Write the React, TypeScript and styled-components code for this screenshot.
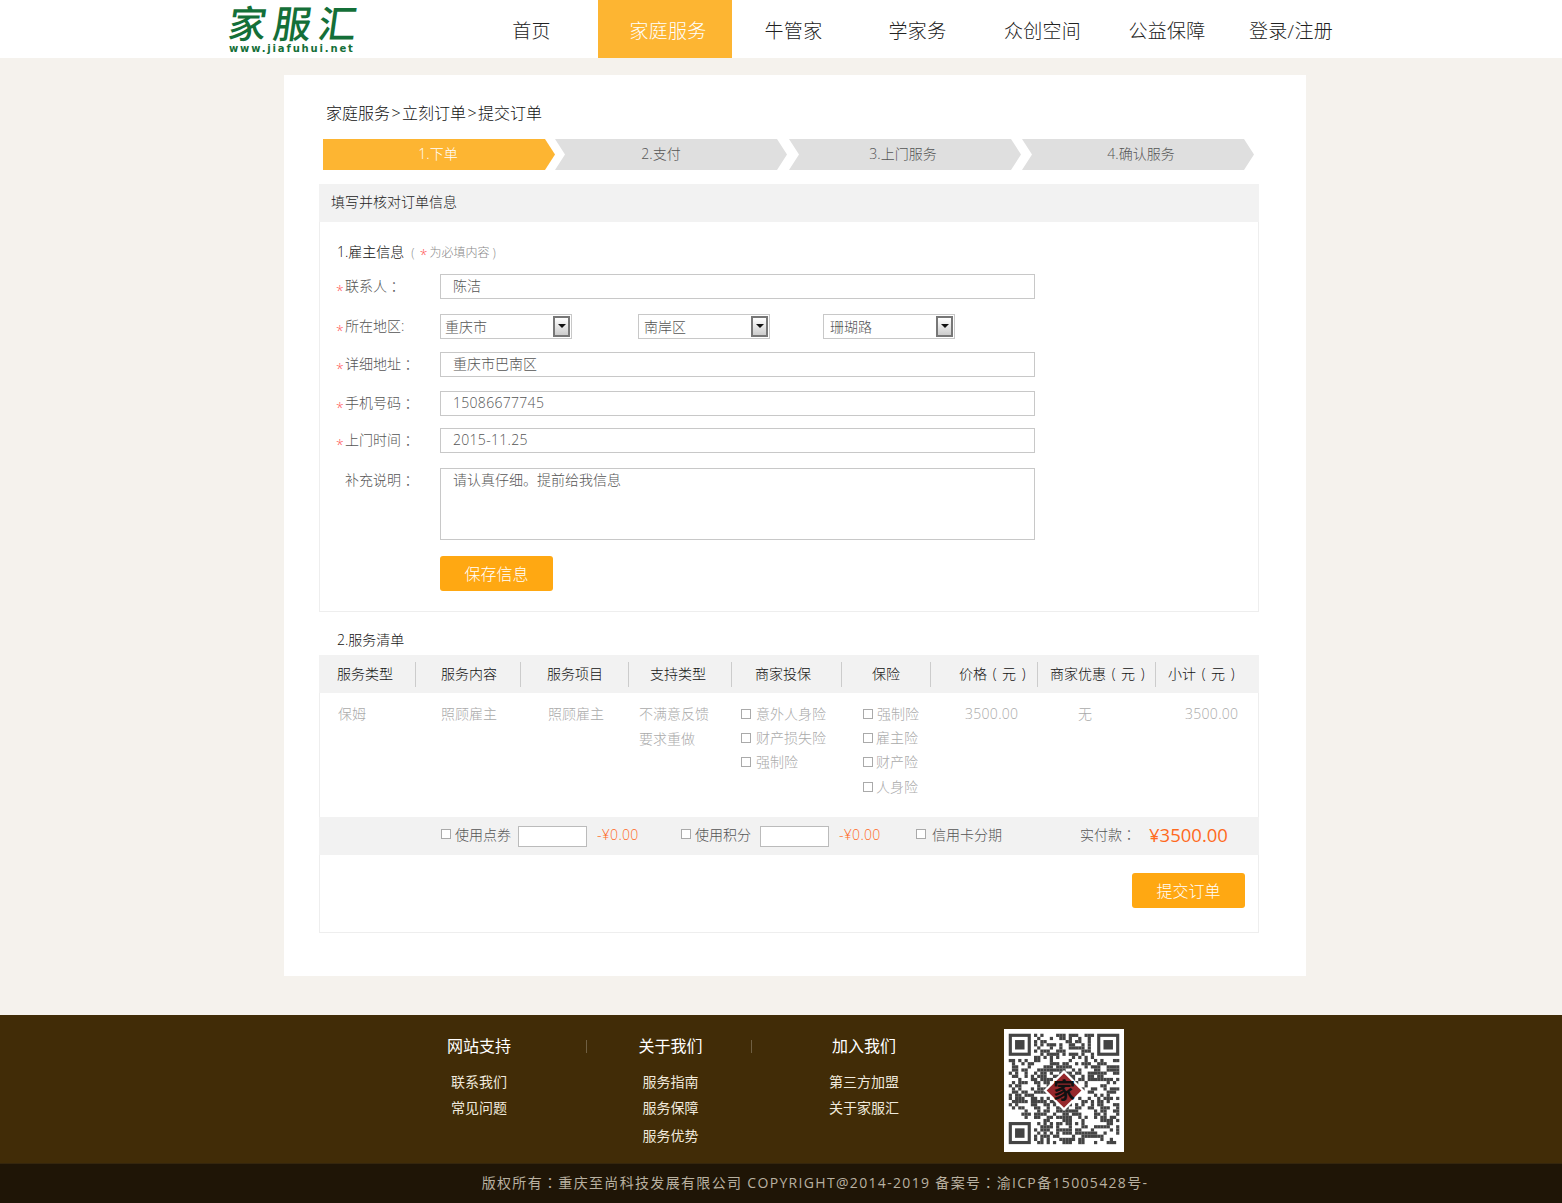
import React from "react";
import styled, { createGlobalStyle } from "styled-components";

const GlobalStyle = createGlobalStyle`
  html, body {
    margin: 0;
    padding: 0;
    background: #f5f2ed;
    font-family: "Open Sans", "Noto Sans CJK SC", sans-serif;
    font-weight: 300;
    font-size: 14px;
    color: #666;
  }
  * { box-sizing: border-box; }
`;

const navItems = [
  { label: "首页", width: 133 },
  { label: "家庭服务", width: 134, active: true },
  { label: "牛管家", width: 123 },
  { label: "学家务", width: 125 },
  { label: "众创空间", width: 125 },
  { label: "公益保障", width: 124 },
  { label: "登录/注册", width: 124 },
];

const steps = [
  { label: "1.下单", first: true, gap: 0, shift: -2 },
  { label: "2.支付", gap: 0, shift: -20 },
  { label: "3.上门服务", gap: 2, shift: -4 },
  { label: "4.确认服务", gap: 1, shift: 6 },
];

const columns = [
  { label: "服务类型", width: 97, pad: 18 },
  { label: "服务内容", width: 105, pad: 25 },
  { label: "服务项目", width: 108, pad: 26 },
  { label: "支持类型", width: 103, pad: 21 },
  { label: "商家投保", width: 110, pad: 23 },
  { label: "保险", width: 89, pad: 30 },
  { label: "价格 ( 元 )", width: 107, pad: 28 },
  { label: "商家优惠 ( 元 )", width: 118, pad: 12 },
  { label: "小计 ( 元 )", width: 103, pad: 12 },
];

const gridCols = "97px 105px 108px 103px 110px 89px 107px 118px 103px";

// fake QR data, same every render
const QR_SIZE = 35;
const qrCells: [number, number][] = [];
let seed = 7421;
const inFinder = (x: number, y: number) =>
  (x < 8 && y < 8) || (x > QR_SIZE - 9 && y < 8) || (x < 8 && y > QR_SIZE - 9);
for (let y = 0; y < QR_SIZE; y++) {
  for (let x = 0; x < QR_SIZE; x++) {
    seed = (seed * 1103515245 + 12345) & 0x7fffffff;
    if (!inFinder(x, y) && (seed >> 16) % 100 < 52) qrCells.push([x, y]);
  }
}
const finders = [
  [0, 0],
  [QR_SIZE - 7, 0],
  [0, QR_SIZE - 7],
];

const QrCode = () => (
  <svg width="120" height="123" viewBox="-1.5 -1.5 38 39" preserveAspectRatio="none" style={{ display: "block" }}>
    <rect x="-1.5" y="-1.5" width="38" height="39" fill="#fff" />
    {qrCells.map(([x, y]) => (
      <rect key={`${x}-${y}`} x={x} y={y} width="1.02" height="1.02" fill="#444" />
    ))}
    {finders.map(([x, y]) => (
      <g key={`${x}-${y}`}>
        <rect x={x + 0.5} y={y + 0.5} width="6" height="6" fill="none" stroke="#444" strokeWidth="1" />
        <rect x={x + 2} y={y + 2} width="3" height="3" fill="#444" />
      </g>
    ))}
    <polygon points="17.5,11.5 24,18 17.5,24.5 11,18" fill="#fff" />
    <polygon points="17.5,12.5 23,18 17.5,23.5 12,18" fill="#96282c" />
    <text x="17.5" y="20.4" textAnchor="middle" fontSize="7" fontWeight="700" fill="#111">家</text>
  </svg>
);

const App = () => {
  return (
    <>
      <GlobalStyle />
      <Header>
        <Logo>
          <LogoName>家服汇</LogoName>
          <LogoUrl>www.jiafuhui.net</LogoUrl>
        </Logo>
        <Nav>
          {navItems.map((item) => (
            <NavItem key={item.label} $width={item.width} $active={item.active}>
              {item.label}
            </NavItem>
          ))}
        </Nav>
      </Header>

      <Main>
        <Panel>
          <Crumb>家庭服务 &gt; 立刻订单 &gt; 提交订单</Crumb>
          <Steps>
            {steps.map((s) => (
              <Step key={s.label} $first={s.first} $gap={s.gap} $shift={s.shift}>
                {s.label}
              </Step>
            ))}
          </Steps>

          <SectionHead>填写并核对订单信息</SectionHead>
          <FormBox>
            <SectionTitle>
              1.雇主信息
              <Hint>
                ( <i>*</i>为必填内容 )
              </Hint>
            </SectionTitle>

            <Row $top={12}>
              <Label><Star>*</Star>联系人<Colon>：</Colon></Label>
              <TextInput>陈洁</TextInput>
            </Row>
            <Row $top={15}>
              <Label><Star>*</Star>所在地区:</Label>
              <Select $width={132} $pad={4}>重庆市<SelectArrow /></Select>
              <Select $width={132} $left={66} $pad={5}>南岸区<SelectArrow /></Select>
              <Select $width={132} $left={53} $pad={6}>珊瑚路<SelectArrow /></Select>
            </Row>
            <Row $top={13}>
              <Label><Star>*</Star>详细地址<Colon>：</Colon></Label>
              <TextInput>重庆市巴南区</TextInput>
            </Row>
            <Row $top={14}>
              <Label><Star>*</Star>手机号码<Colon>：</Colon></Label>
              <TextInput><Digits>15086677745</Digits></TextInput>
            </Row>
            <Row $top={12}>
              <Label><Star>*</Star>上门时间<Colon>：</Colon></Label>
              <TextInput><Digits>2015-11.25</Digits></TextInput>
            </Row>
            <Row $top={15} $start>
              <Label $top={2}><Star />补充说明<Colon>：</Colon></Label>
              <TextArea>请认真仔细。提前给我信息</TextArea>
            </Row>
            <SaveRow>
              <OrangeButton>保存信息</OrangeButton>
            </SaveRow>
          </FormBox>

          <ListTitle>2.服务清单</ListTitle>
          <TableHead>
            {columns.map((c, i) => (
              <HeadCell key={c.label} $pad={c.pad} $last={i === columns.length - 1}>
                {c.label}
              </HeadCell>
            ))}
          </TableHead>
          <TableBody>
            <BodyCell $pad={18}>保姆</BodyCell>
            <BodyCell $pad={25}>照顾雇主</BodyCell>
            <BodyCell $pad={27}>照顾雇主</BodyCell>
            <BodyCell $pad={10}>
              <Line>不满意反馈</Line>
              <Line $height={26}>要求重做</Line>
            </BodyCell>
            <BodyCell $pad={9}>
              <Line><Check />意外人身险</Line>
              <Line><Check />财产损失险</Line>
              <Line><Check />强制险</Line>
            </BodyCell>
            <BodyCell $pad={21}>
              <Line><Check $right={4} />强制险</Line>
              <Line><Check $right={3} />雇主险</Line>
              <Line><Check $right={3} />财产险</Line>
              <Line $height={26}><Check $right={3} />人身险</Line>
            </BodyCell>
            <BodyCell $pad={34}><Digits>3500.00</Digits></BodyCell>
            <BodyCell $pad={40}>无</BodyCell>
            <BodyCell $pad={29}><Digits>3500.00</Digits></BodyCell>
          </TableBody>

          <Summary>
            <SumGroup $width={240}>
              <Check $right={4} />使用点券
              <SumInput />
              <Minus>-¥0.00</Minus>
            </SumGroup>
            <SumGroup $width={235}>
              <Check $right={4} />使用积分
              <SumInput $left={9} />
              <Minus>-¥0.00</Minus>
            </SumGroup>
            <SumGroup $width={164}>
              <Check $right={6} />信用卡分期
            </SumGroup>
            <SumGroup $width={69}>实付款<Colon>：</Colon></SumGroup>
            <Total>¥3500.00</Total>
          </Summary>
          <SubmitBox>
            <OrangeButton>提交订单</OrangeButton>
          </SubmitBox>
        </Panel>
      </Main>

      <Footer>
        <FootColumn $width={214}>
          <FootTitle>网站支持</FootTitle>
          <FootLink>联系我们</FootLink>
          <FootLink>常见问题</FootLink>
        </FootColumn>
        <FootSep />
        <FootColumn $width={164} $pad={3}>
          <FootTitle>关于我们</FootTitle>
          <FootLink>服务指南</FootLink>
          <FootLink>服务保障</FootLink>
          <FootLink $height={30}>服务优势</FootLink>
        </FootColumn>
        <FootSep />
        <FootColumn $width={223} $pad={1}>
          <FootTitle>加入我们</FootTitle>
          <FootLink>第三方加盟</FootLink>
          <FootLink>关于家服汇</FootLink>
        </FootColumn>
        <QrBox>
          <QrCode />
        </QrBox>
      </Footer>
      <Copyright>
        版权所有<Colon>：</Colon>重庆至尚科技发展有限公司 COPYRIGHT@2014-2019 备案号<Colon>：</Colon>渝ICP备15005428号-
      </Copyright>
    </>
  );
};

export default App;

const Header = styled.header`
  height: 58px;
  background: #fff;
  display: flex;
  padding-left: 226px;
`;

const Logo = styled.div`
  width: 239px;
  color: #146f38;
`;

const LogoName = styled.div`
  font-family: "Noto Sans CJK SC", sans-serif;
  font-size: 38px;
  line-height: 44px;
  height: 44px;
  font-weight: 500;
  letter-spacing: 7px;
  transform: skewX(-8deg);
  transform-origin: left bottom;
`;

const LogoUrl = styled.div`
  font-family: "DejaVu Sans", sans-serif;
  font-size: 10px;
  line-height: 13px;
  margin-top: -2px;
  font-weight: 700;
  letter-spacing: 1.85px;
  padding-left: 3px;
`;

const Nav = styled.nav`
  display: flex;
`;

const NavItem = styled.a<{ $width: number; $active?: boolean }>`
  width: ${(p) => p.$width}px;
  height: 58px;
  display: flex;
  align-items: center;
  justify-content: center;
  font-size: 19px;
  letter-spacing: 0.3px;
  padding-top: 2px;
  padding-left: ${(p) => (p.$active ? 6 : 0)}px;
  color: ${(p) => (p.$active ? "#fff" : "#222")};
  background: ${(p) => (p.$active ? "#fdb532" : "transparent")};
`;

const Main = styled.main`
  padding: 17px 0 39px 284px;
`;

const Panel = styled.div`
  width: 1022px;
  height: 901px;
  background: #fff;
  padding: 26px 47px 0 35px;
`;

const Crumb = styled.div`
  margin-left: 7px;
  font-size: 16px;
  line-height: 24px;
  color: #111;
  white-space: pre;
  word-spacing: -2.7px;
`;

const Steps = styled.div`
  display: flex;
  margin: 14px 0 0 4px;
`;

const Step = styled.div<{ $first?: boolean; $gap: number; $shift: number }>`
  width: 232px;
  height: 31px;
  margin-left: ${(p) => p.$gap}px;
  display: flex;
  align-items: center;
  justify-content: center;
  padding-bottom: 3px;
  padding-left: ${(p) => Math.max(p.$shift, 0)}px;
  padding-right: ${(p) => Math.max(-p.$shift, 0)}px;
  background: ${(p) => (p.$first ? "#fdb532" : "#dfdfdf")};
  color: ${(p) => (p.$first ? "#fff" : "#555")};
  clip-path: ${(p) =>
    p.$first
      ? "polygon(0 0, 222px 0, 232px 50%, 222px 100%, 0 100%)"
      : "polygon(0 0, 222px 0, 232px 50%, 222px 100%, 0 100%, 10px 50%)"};
`;

const SectionHead = styled.div`
  margin-top: 14px;
  height: 38px;
  line-height: 36px;
  padding-left: 12px;
  background: #f2f2f2;
  color: #222;
`;

const FormBox = styled.div`
  height: 390px;
  border: 1px solid #eee;
  border-top: 0;
  padding-top: 20px;
`;

const SectionTitle = styled.div`
  padding-left: 17px;
  height: 20px;
  line-height: 20px;
  color: #111;
`;

const Hint = styled.span`
  font-size: 12px;
  color: #888;
  margin-left: 7px;

  i {
    position: relative;
    top: 3px;
    font-style: normal;
    font-size: 14px;
    line-height: 1;
    color: #f55;
    margin: 0 2px;
  }
`;

const Row = styled.div<{ $top: number; $start?: boolean }>`
  display: flex;
  align-items: ${(p) => (p.$start ? "flex-start" : "center")};
  margin-top: ${(p) => p.$top}px;
`;

const Label = styled.div<{ $top?: number }>`
  width: 120px;
  padding-left: 16px;
  padding-top: ${(p) => p.$top ?? 0}px;
  padding-bottom: 2px;
  display: flex;
  align-items: center;
  color: #555;
  line-height: 20px;
`;

const Colon = styled.span`
  font-family: "Noto Sans CJK TC", sans-serif;
`;

const Digits = styled.span`
  letter-spacing: 0.3px;
`;

const Star = styled.span`
  width: 9px;
  height: 20px;
  padding-top: 5px;
  color: #f55;
  font-size: 14px;
  line-height: 20px;
`;

const TextInput = styled.div`
  width: 595px;
  height: 25px;
  border: 1px solid #c8c8c8;
  padding-left: 12px;
  line-height: 21px;
  color: #555;
`;

const TextArea = styled(TextInput)`
  height: 72px;
`;

const Select = styled.div<{ $width: number; $left?: number; $pad: number }>`
  position: relative;
  width: ${(p) => p.$width}px;
  height: 25px;
  margin-left: ${(p) => p.$left ?? 0}px;
  border: 1px solid #c8c8c8;
  padding-left: ${(p) => p.$pad}px;
  line-height: 23px;
  color: #555;
`;

const SelectArrow = styled.span`
  position: absolute;
  top: 1px;
  right: 1px;
  width: 17px;
  height: 21px;
  border: 2px solid #777;
  background: linear-gradient(#fff, #ccc);

  &::after {
    content: "";
    position: absolute;
    left: 3px;
    top: 6px;
    border-left: 4px solid transparent;
    border-right: 4px solid transparent;
    border-top: 4px solid #111;
  }
`;

const SaveRow = styled.div`
  margin: 16px 0 0 120px;
`;

const OrangeButton = styled.button`
  width: 113px;
  height: 35px;
  border: 0;
  border-radius: 3px;
  background: #ffa812;
  color: #fff;
  font: inherit;
  font-size: 16px;
  padding: 0 0 2px;
`;

const ListTitle = styled.div`
  margin-top: 18px;
  padding-left: 18px;
  line-height: 20px;
  color: #111;
`;

const TableHead = styled.div`
  margin-top: 5px;
  height: 38px;
  background: #f2f2f2;
  display: grid;
  grid-template-columns: ${gridCols};
  align-items: center;
`;

const HeadCell = styled.div<{ $pad: number; $last?: boolean }>`
  height: 25px;
  line-height: 23px;
  padding-left: ${(p) => p.$pad}px;
  color: #111;
  white-space: pre;
  word-spacing: 2px;
  border-right: ${(p) => (p.$last ? "0" : "1px solid #ccc")};
`;

const TableBody = styled.div`
  height: 124px;
  padding-top: 9px;
  border-left: 1px solid #eee;
  border-right: 1px solid #eee;
  display: grid;
  grid-template-columns: 96px 105px 108px 103px 110px 89px 107px 118px 102px;
  align-items: start;
`;

const BodyCell = styled.div<{ $pad: number }>`
  padding-left: ${(p) => p.$pad}px;
  line-height: 24px;
  color: #aaa;
  white-space: nowrap;
`;

const Line = styled.div<{ $height?: number }>`
  display: flex;
  align-items: center;
  height: ${(p) => p.$height ?? 24}px;
`;

const Check = styled.span<{ $right?: number }>`
  display: inline-block;
  flex: none;
  width: 10px;
  height: 10px;
  border: 1px solid #aaa;
  margin-right: ${(p) => p.$right ?? 5}px;
  background: #fff;
`;

const Summary = styled.div`
  height: 38px;
  background: #f2f2f2;
  padding-left: 122px;
  padding-bottom: 4px;
  display: flex;
  align-items: center;
  color: #555;
`;

const SumGroup = styled.div<{ $width: number }>`
  width: ${(p) => p.$width}px;
  flex: none;
  display: flex;
  align-items: center;
  white-space: nowrap;
`;

const SumInput = styled.span<{ $left?: number }>`
  display: block;
  width: 69px;
  height: 21px;
  margin-top: 4px;
  margin-left: ${(p) => p.$left ?? 7}px;
  border: 1px solid #bbb;
  background: #fff;
`;

const Minus = styled.span`
  margin-left: 10px;
  letter-spacing: 0.3px;
  color: #ff6a1e;
`;

const Total = styled.div`
  font-size: 18.5px;
  font-weight: 400;
  color: #ff6a1e;
`;

const SubmitBox = styled.div`
  height: 78px;
  border: 1px solid #eee;
  border-top: 0;
  padding: 18px 13px 0 0;
  display: flex;
  justify-content: flex-end;
  align-items: flex-start;
`;

const Footer = styled.footer`
  height: 148px;
  background: #412c07;
  padding: 16px 0 0 372px;
  display: flex;
  align-items: flex-start;
`;

const FootColumn = styled.div<{ $width: number; $pad?: number }>`
  width: ${(p) => p.$width}px;
  padding-left: ${(p) => p.$pad ?? 0}px;
  text-align: center;
  color: #efe9dc;
  font-weight: 400;
`;

const FootTitle = styled.div`
  font-size: 16px;
  line-height: 30px;
  color: #fff;
  margin-bottom: 8px;
`;

const FootLink = styled.div<{ $height?: number }>`
  line-height: ${(p) => p.$height ?? 26}px;
`;

const FootSep = styled.div`
  width: 1px;
  height: 13px;
  margin-top: 9px;
  background: #6f5f42;
`;

const QrBox = styled.div`
  margin: -2px 0 0 29px;
`;

const Copyright = styled.div`
  height: 40px;
  background: #1f1506;
  border-top: 1px solid #35260d;
  text-align: center;
  padding-left: 68px;
  line-height: 37px;
  color: #b8b0a0;
  font-weight: 400;
  letter-spacing: 1.33px;
`;
